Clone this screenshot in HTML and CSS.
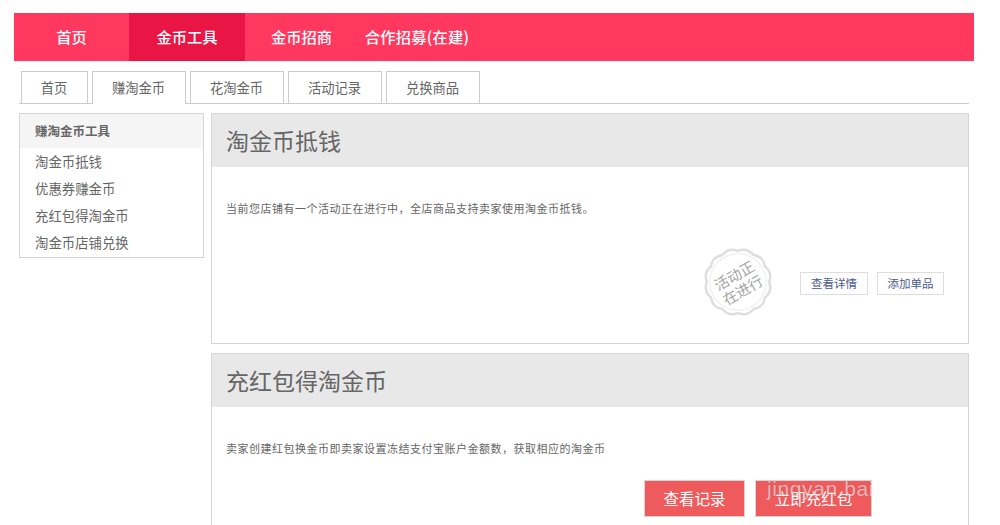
FILE: index.html
```html
<!DOCTYPE html>
<html lang="zh-CN">
<head>
    <meta charset="UTF-8">
    <title>淘金币工具</title>
    <link rel="stylesheet" href="styles.css">
</head>
<body>
    <!-- Top nav -->
    <div class="main-nav">
        <a class="main-nav-item">首页</a>
        <a class="main-nav-item active">金币工具</a>
        <a class="main-nav-item">金币招商</a>
        <a class="main-nav-item">合作招募(在建)</a>
    </div>

    <!-- Tabs -->
    <div class="tabs">
        <a class="tab tab-first">首页</a>
        <a class="tab active">赚淘金币</a>
        <a class="tab">花淘金币</a>
        <a class="tab">活动记录</a>
        <a class="tab">兑换商品</a>
    </div>

    <div class="content">
        <div class="side">
            <div class="side-title">赚淘金币工具</div>
            <ul class="side-list">
                <li>淘金币抵钱</li>
                <li>优惠券赚金币</li>
                <li>充红包得淘金币</li>
                <li>淘金币店铺兑换</li>
            </ul>
        </div>

        <div class="main">
            <div class="panel">
                <div class="panel-head">淘金币抵钱</div>
                <div class="panel-body">
                    <p class="panel-text">当前您店铺有一个活动正在进行中，全店商品支持卖家使用淘金币抵钱。</p>
                    <div class="panel-actions">
                        <div class="stamp">
                            <svg class="stamp-edge" width="72" height="72" viewBox="0 0 74 74">
                                <path d="M69 37 Q72.7 27.4 64.7 21 Q63.2 10.8 53 9.3 Q46.6 1.3 37 5 Q27.4 1.3 21 9.3 Q10.8 10.8 9.3 21 Q1.3 27.4 5 37 Q1.3 46.6 9.3 53 Q10.8 63.2 21 64.7 Q27.4 72.7 37 69 Q46.6 72.7 53 64.7 Q63.2 63.2 64.7 53 Q72.7 46.6 69 37 Z" fill="#fff" stroke="#dedede" stroke-width="2.5" stroke-linejoin="round"/>
                                <circle cx="37" cy="37" r="29" fill="none" stroke="#f1f1f1" stroke-width="1.5"/>
                            </svg>
                            <div class="stamp-text">活动正<br>在进行</div>
                        </div>
                        <a class="btn-small">查看详情</a>
                        <a class="btn-small btn-small-last">添加单品</a>
                    </div>
                </div>
            </div>

            <div class="panel">
                <div class="panel-head">充红包得淘金币</div>
                <div class="panel-body">
                    <p class="panel-text">卖家创建红包换金币即卖家设置冻结支付宝账户金额数，获取相应的淘金币</p>
                    <div class="panel-actions panel-actions-big">
                        <a class="btn-red btn-record">查看记录</a>
                        <a class="btn-red btn-charge">立即充红包<span class="watermark">jingyan.bai</span></a>
                    </div>
                </div>
            </div>
        </div>
    </div>
</body>
</html>
```

FILE: styles.css
```css
html, body {
    height: 525px;
    overflow: hidden;
}
body {
    margin: 0;
    padding: 13px 26px 0 14px;
    box-sizing: border-box;
    background: #fff;
    color: #666;
    font-family: "Noto Sans CJK SC", "Liberation Sans", sans-serif;
}
/* Top nav */
.main-nav {
    display: flex;
    height: 48px;
    background-color: #ff3860;
}
.main-nav-item {
    width: 115px;
    line-height: 47px;
    text-align: center;
    font-size: 15.3px;
    font-weight: 500;
    color: #fff;
    white-space: nowrap;
}
.main-nav-item:nth-child(2) {
    width: 116px;
}
.main-nav-item:nth-child(3) {
    width: 113px;
}
.main-nav-item:last-child {
    width: 118px;
    letter-spacing: 0.2px;
}
.main-nav-item.active {
    background-color: #e81545;
}
/* Tabs */
.tabs {
    display: flex;
    gap: 4px;
    height: 32px;
    margin: 10px 5px 0 5px;
    padding-left: 2px;
    border-bottom: 1px solid #ccc;
}
.tab {
    width: 94px;
    height: 32px;
    box-sizing: border-box;
    border: 1px solid #ccc;
    border-bottom: 0;
    padding-right: 1px;
    line-height: 32px;
    text-align: center;
    font-size: 13.3px;
    color: #666;
    background: #fff;
}
.tab-first {
    width: 67px;
}
.tab.active {
    height: 33px;
}
/* Layout */
.content {
    display: flex;
    align-items: flex-start;
    gap: 7px;
    height: 412px;
    overflow: hidden;
    margin: 9px 5px 0 5px;
}
.side {
    width: 185px;
    box-sizing: border-box;
    border: 1px solid #d5d5d5;
    padding-bottom: 1px;
    flex-shrink: 0;
}
.side-title {
    height: 34px;
    line-height: 34px;
    padding-left: 15px;
    font-size: 12.5px;
    font-weight: bold;
    color: #666;
    background-color: #f5f5f5;
}
.side-list {
    list-style: none;
    margin: 0;
    padding: 0 0 0 15px;
}
.side-list li {
    height: 27px;
    line-height: 26px;
    font-size: 13.4px;
    color: #666;
}
.main {
    flex: 1;
    display: flex;
    flex-direction: column;
    gap: 9px;
}
/* Panels */
.panel {
    border: 1px solid #d5d5d5;
    height: 231px;
    box-sizing: border-box;
    flex-shrink: 0;
}
.panel-head {
    height: 53px;
    line-height: 53px;
    padding-left: 14px;
    font-size: 23px;
    color: #666;
    background-color: #e8e8e8;
}
.panel-body {
    padding: 34px 24px 0 14px;
}
.panel-text {
    margin: 0;
    height: 14px;
    line-height: 14px;
    font-size: 11px;
    letter-spacing: 0.5px;
    color: #666;
}
.panel-actions {
    display: flex;
    align-items: flex-start;
    justify-content: flex-end;
    gap: 9px;
    margin-top: 57px;
    position: relative;
}
.panel-actions-big {
    gap: 10px;
    margin-top: 25px;
    margin-right: 72px;
}
.btn-small {
    width: 68px;
    height: 23px;
    box-sizing: border-box;
    border: 1px solid #ddd;
    line-height: 21px;
    text-align: center;
    font-size: 11.5px;
    color: #4a5a8c;
}
.btn-small-last {
    width: 67px;
}
.btn-red {
    height: 37px;
    box-sizing: border-box;
    border: 1px solid #d5d5d5;
    line-height: 35px;
    text-align: center;
    font-size: 15.5px;
    color: #fff;
    background-color: #ef5a5c;
    position: relative;
}
.btn-record {
    width: 101px;
}
.btn-charge {
    width: 117px;
}
/* Sits over the button, as in the original screenshot */
.watermark {
    position: absolute;
    left: 11px;
    top: -2px;
    line-height: 20px;
    font-family: "Liberation Sans", sans-serif;
    font-size: 21px;
    letter-spacing: 0.6px;
    color: rgba(255, 255, 255, 0.62);
    text-shadow: 0 0 1px rgba(0, 0, 0, 0.22);
    white-space: nowrap;
}
.stamp {
    position: absolute;
    left: 476px;
    top: -26px;
    width: 72px;
    height: 72px;
}
.stamp-edge {
    display: block;
}
.stamp-text {
    position: absolute;
    inset: 0;
    display: flex;
    align-items: center;
    justify-content: center;
    text-align: center;
    font-size: 14.5px;
    line-height: 17px;
    color: #a4a4a4;
    transform: rotate(-30deg);
}
```
